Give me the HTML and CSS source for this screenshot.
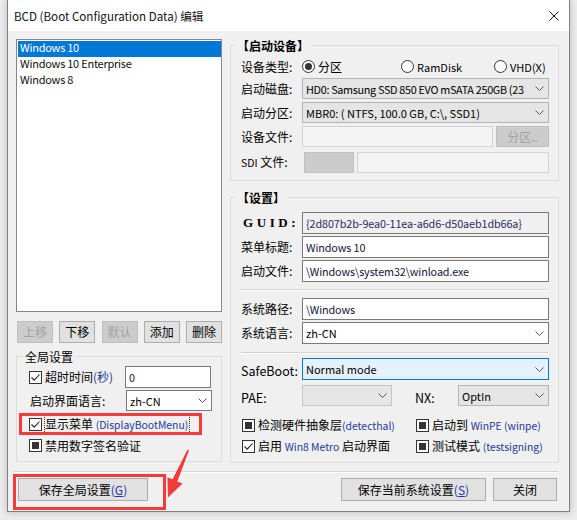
FILE: index.html
```html
<!DOCTYPE html>
<html lang="zh-CN">
<head>
<meta charset="utf-8">
<title>BCD 编辑</title>
<link rel="stylesheet" href="styles.css">
</head>
<body>
<div class="window">
  <div class="titlebar">
    <span class="title">BCD (Boot Configuration Data) 编辑</span>
    <svg class="close" width="10" height="10" viewBox="0 0 10 10"><path d="M0.5 0.5L9.5 9.5M9.5 0.5L0.5 9.5" stroke="#111" stroke-width="1" fill="none"/></svg>
  </div>
  <div class="client">
    <div class="main">
      <div class="left">
        <div class="listbox">
          <div class="item sel">Windows 10</div>
          <div class="item">Windows 10 Enterprise</div>
          <div class="item">Windows 8</div>
        </div>
        <div class="listbtns">
          <button class="btn small dis">上移</button>
          <button class="btn small">下移</button>
          <button class="btn small dis">默认</button>
          <button class="btn small">添加</button>
          <button class="btn small">删除</button>
        </div>
        <div class="group ggroup">
          <span class="gtitle plain">全局设置</span>
          <div class="lrow h22">
            <div class="lcell"><span class="cb"><svg width="11" height="11" viewBox="0 0 11 11"><path d="M1.5 5.5L4.2 8.2L9.5 2.5" stroke="#222" stroke-width="1.1" fill="none"/></svg></span><span class="cbtext">超时时间<span class="blue zh">(秒)</span></span></div>
            <div class="edit lfield">0</div>
          </div>
          <div class="lrow h21 mt2">
            <div class="lcell plabel">启动界面语言:</div>
            <div class="select white lfield"><span class="val">zh-CN</span><svg class="chev" width="9" height="5" viewBox="0 0 9 5"><path d="M0.5 0.5L4.5 4.5L8.5 0.5" stroke="#555" fill="none"/></svg></div>
          </div>
          <div class="lrow h21 mt3">
            <div class="lcell"><span class="cb"><svg width="11" height="11" viewBox="0 0 11 11"><path d="M1.5 5.5L4.2 8.2L9.5 2.5" stroke="#222" stroke-width="1.1" fill="none"/></svg></span><span class="cbtext focus">显示菜单 <span class="blue">(DisplayBootMenu)</span></span></div>
          </div>
          <div class="lrow h21">
            <div class="lcell"><span class="cb ind"></span><span class="cbtext">禁用数字签名验证</span></div>
          </div>
        </div>
      </div>

      <div class="right">
        <div class="group dev">
          <span class="gtitle">【启动设备】</span>
          <div class="frow h21">
            <div class="flabel">设备类型:</div>
            <div class="radios">
              <span class="ritem r1"><span class="rb on"></span>分区</span>
              <span class="ritem r2"><span class="rb"></span><span class="lat">RamDisk</span></span>
              <span class="ritem r3"><span class="rb"></span><span class="lat">VHD(X)</span></span>
            </div>
          </div>
          <div class="frow h21 mt1">
            <div class="flabel">启动磁盘:</div>
            <div class="select gray ffield"><span class="val tight">HD0: Samsung SSD 850 EVO mSATA 250GB (23</span><svg class="chev" width="9" height="5" viewBox="0 0 9 5"><path d="M0.5 0.5L4.5 4.5L8.5 0.5" stroke="#555" fill="none"/></svg></div>
          </div>
          <div class="frow h21 mt3">
            <div class="flabel">启动分区:</div>
            <div class="select gray ffield"><span class="val">MBR0: ( NTFS, 100.0 GB, C:\, SSD1)</span><svg class="chev" width="9" height="5" viewBox="0 0 9 5"><path d="M0.5 0.5L4.5 4.5L8.5 0.5" stroke="#555" fill="none"/></svg></div>
          </div>
          <div class="frow h21 mt3">
            <div class="flabel">设备文件:</div>
            <div class="edit disabled filefield"></div>
            <button class="btn dis pbtn">分区..</button>
          </div>
          <div class="frow h21 mt5">
            <div class="flabel"><span class="sdi">SDI</span> 文件:</div>
            <div class="graybox"></div>
            <div class="edit disabled sdifield"></div>
          </div>
        </div>

        <div class="group set">
          <span class="gtitle">【设置】</span>
          <div class="frow h22">
            <div class="flabel guid">GUID:</div>
            <div class="edit ro ffield">{2d807b2b-9ea0-11ea-a6d6-d50aeb1db66a}</div>
          </div>
          <div class="frow h22 mt2">
            <div class="flabel">菜单标题:</div>
            <div class="edit ffield">Windows 10</div>
          </div>
          <div class="frow h22 mt2">
            <div class="flabel">启动文件:</div>
            <div class="edit ffield">\Windows\system32\winload.exe</div>
          </div>
          <div class="hsep s1"></div>
          <div class="frow h22">
            <div class="flabel">系统路径:</div>
            <div class="edit ffield">\Windows</div>
          </div>
          <div class="frow h22 mt2">
            <div class="flabel">系统语言:</div>
            <div class="select white ffield"><span class="val">zh-CN</span><svg class="chev" width="9" height="5" viewBox="0 0 9 5"><path d="M0.5 0.5L4.5 4.5L8.5 0.5" stroke="#555" fill="none"/></svg></div>
          </div>
          <div class="hsep s2"></div>
          <div class="frow h22">
            <div class="flabel lat13 low">SafeBoot:</div>
            <div class="select focus ffield"><span class="val">Normal mode</span><svg class="chev" width="9" height="5" viewBox="0 0 9 5"><path d="M0.5 0.5L4.5 4.5L8.5 0.5" stroke="#555" fill="none"/></svg></div>
          </div>
          <div class="frow h21 mt5">
            <div class="flabel lat13 low">PAE:</div>
            <div class="select dimmed pae"><span class="val"></span><svg class="chev" width="9" height="5" viewBox="0 0 9 5"><path d="M0.5 0.5L4.5 4.5L8.5 0.5" stroke="#555" fill="none"/></svg></div>
            <div class="nxlabel lat13 low">NX:</div>
            <div class="select gray nx"><span class="val">OptIn</span><svg class="chev" width="9" height="5" viewBox="0 0 9 5"><path d="M0.5 0.5L4.5 4.5L8.5 0.5" stroke="#555" fill="none"/></svg></div>
          </div>
          <div class="cbgrid">
            <div class="lcell"><span class="cb ind"></span><span class="cbtext">检测硬件抽象层<span class="blue">(detecthal)</span></span></div>
            <div class="lcell"><span class="cb ind"></span><span class="cbtext">启动到 <span class="blue">WinPE (winpe)</span></span></div>
            <div class="lcell"><span class="cb"><svg width="11" height="11" viewBox="0 0 11 11"><path d="M1.5 5.5L4.2 8.2L9.5 2.5" stroke="#222" stroke-width="1.1" fill="none"/></svg></span><span class="cbtext">启用 <span class="blue">Win8 Metro</span> 启动界面</span></div>
            <div class="lcell"><span class="cb ind"></span><span class="cbtext">测试模式 <span class="blue">(testsigning)</span></span></div>
          </div>
        </div>
      </div>
    </div>
    <div class="bsep"></div>
    <div class="bottombar">
      <button class="btn big saveg">保存全局设置<span class="blue zh">(<u>G</u>)</span></button>
      <div class="rbtns">
        <button class="btn big saves">保存当前系统设置<span class="blue zh">(<u>S</u>)</span></button>
        <button class="btn big closeb">关闭</button>
      </div>
    </div>
  </div>
</div>
<svg class="annot" width="577" height="520" viewBox="0 0 577 520">
  <rect x="20.5" y="414.5" width="180" height="19" fill="none" stroke="#f33b3b" stroke-width="3"/>
  <rect x="14.5" y="475.5" width="150" height="33" fill="none" stroke="#f33b3b" stroke-width="3"/>
  <polygon points="189,450.5 177.3,481.4 182.6,483.6 168,497.5 167.4,477.2 172.6,479.3 187.6,449.6" fill="#f33b3b"/>
</svg>
</body>
</html>
```
FILE: styles.css
```css
html, body {
  margin: 0;
  padding: 0;
}
body {
  width: 577px;
  height: 520px;
  background: #ececec;
  position: relative;
  overflow: hidden;
  font-family: "Noto Sans CJK SC", "Noto Sans", sans-serif;
  font-size: 12px;
  color: #000;
}
.window {
  margin-left: 7px;
  width: 563px;
  height: 512px;
  box-sizing: border-box;
  border: 1px solid #7f7f7f;
  border-top: 0;
  background: #f0f0f0;
  box-shadow: 0 0 7px rgba(0, 0, 0, 0.22);
  display: flex;
  flex-direction: column;
}
.titlebar {
  height: 31px;
  flex: none;
  background: #fff;
  display: flex;
  align-items: center;
  justify-content: space-between;
  padding: 0 10px 0 6px;
}
.title {
  font-size: 11.6px;
  color: #111;
  line-height: 16px;
}
.close { display: block; }
.client {
  flex: 1;
  padding: 8px 10px 0 8px;
  display: flex;
  flex-direction: column;
}
.main {
  display: flex;
  gap: 8px;
  height: 424px;
}
.left {
  width: 206px;
  display: flex;
  flex-direction: column;
}
.right {
  width: 329px;
  display: flex;
  flex-direction: column;
}

/* listbox */
.listbox {
  height: 273px;
  box-sizing: border-box;
  border: 1px solid #828790;
  background: #fff;
  padding: 1px 0 1px 1px;
}
.item {
  height: 16px;
  line-height: 13px;
  padding-left: 2px;
  font-size: 11px;
  letter-spacing: -0.25px;
  color: #111;
  white-space: nowrap;
}
.item.sel {
  background: #0078d7;
  color: #fff;
}
.listbtns {
  margin-top: 9px;
  display: flex;
  justify-content: space-between;
  padding-left: 1px;
}

/* buttons */
.btn {
  font-family: inherit;
  font-size: 12px;
  color: #000;
  background: #e1e1e1;
  border: 1px solid #adadad;
  box-sizing: border-box;
  padding: 0;
  margin: 0;
  line-height: 16px;
  display: flex;
  align-items: center;
  justify-content: center;
}
.btn.small {
  width: 36px;
  height: 22px;
}
.btn.dis {
  background: #cccccc;
  border-color: #bfbfbf;
  color: #a3a3a3;
}
.btn.big {
  height: 23px;
}

/* group boxes */
.group {
  position: relative;
  border: 1px solid #dcdcdc;
  box-sizing: border-box;
}
.gtitle {
  position: absolute;
  top: -9px;
  left: 4px;
  padding: 0 2px;
  background: #f0f0f0;
  line-height: 17px;
  font-weight: bold;
}
.gtitle.plain {
  font-weight: normal;
  left: 6px;
}
.ggroup {
  margin-top: 13px;
  height: 106px;
  padding: 9px 0 0 12px;
}
.lrow {
  display: flex;
  align-items: center;
}
.lcell {
  width: 96px;
  display: flex;
  align-items: center;
  white-space: nowrap;
  line-height: 16px;
}
.h22 { height: 22px; }
.h21 { height: 21px; }
.mt1 { margin-top: 1px; }
.mt2 { margin-top: 2px; }
.mt3 { margin-top: 3px; }
.mt5 { margin-top: 5px; }
.plabel { padding-left: 1px; }
.lfield { width: 86px; }
.lrow .edit.lfield { height: 22px; }
.lrow .select.lfield { height: 21px; }

/* checkboxes / radios */
.cb {
  width: 13px;
  height: 13px;
  box-sizing: border-box;
  border: 1px solid #333;
  background: #fff;
  display: inline-flex;
  align-items: center;
  justify-content: center;
  flex: none;
}
.cb svg { display: block; }
.cb.ind::after {
  content: "";
  width: 7px;
  height: 7px;
  background: #333;
}
.cbtext {
  margin-left: 3px;
  white-space: nowrap;
}
.cbtext.focus {
  outline: 1px dotted #333;
  outline-offset: 0;
  padding-right: 1px;
}
.blue {
  color: #23389a;
  font-size: 10.4px;
}
.blue.zh {
  font-size: 12px;
}
.rb {
  width: 13px;
  height: 13px;
  box-sizing: border-box;
  border: 1px solid #333;
  border-radius: 50%;
  background: #fff;
  display: inline-flex;
  align-items: center;
  justify-content: center;
  flex: none;
  margin-right: 3px;
}
.rb.on::after {
  content: "";
  width: 7px;
  height: 7px;
  border-radius: 50%;
  background: #333;
}

/* right groups */
.dev {
  margin-top: 6px;
  height: 136px;
  padding: 10px 9px 0 10px;
}
.set {
  margin-top: 16px;
  height: 266px;
  padding: 14px 9px 0 10px;
}
.frow {
  display: flex;
  align-items: center;
}
.flabel {
  width: 61px;
  flex: none;
  white-space: nowrap;
  line-height: 16px;
}
.ffield {
  width: 247px;
  flex: none;
}
.frow .edit, .frow .select { height: 100%; }
.radios {
  display: flex;
  align-items: center;
  height: 100%;
  line-height: 16px;
}
.ritem {
  display: flex;
  align-items: center;
}
.ritem.r1 { width: 99px; }
.ritem.r2 { width: 93px; }
.lat { font-size: 11px; }
.lat13 { font-size: 12.5px; }
.low { padding-top: 4px; }
.sdi { font-size: 10.5px; }
.guid {
  font-family: "Liberation Serif", serif;
  font-weight: bold;
  font-size: 13px;
  letter-spacing: 3.6px;
  padding-left: 2px;
  box-sizing: border-box;
}

/* edits and selects */
.edit {
  box-sizing: border-box;
  border: 1px solid #7a7a7a;
  background: #fff;
  padding: 0 3px;
  display: flex;
  align-items: center;
  white-space: nowrap;
  overflow: hidden;
  font-size: 10.8px;
  letter-spacing: -0.1px;
  color: #14143c;
  line-height: 16px;
}
.edit.ro {
  background: #f0f0f0;
  color: #2a2a66;
}
.edit.disabled {
  background: #f3f3f3;
  border-color: #d3d3d3;
}
.filefield { width: 191px; flex: none; }
.pbtn {
  width: 53px;
  height: 100%;
  margin-left: 3px;
  flex: none;
}
.graybox {
  width: 50px;
  height: 100%;
  margin-left: 2px;
  box-sizing: border-box;
  background: #cccccc;
  border: 1px solid #c0c0c0;
  flex: none;
}
.sdifield {
  width: 192px;
  margin-left: 3px;
  flex: none;
}
.select {
  box-sizing: border-box;
  border: 1px solid #adadad;
  background: #e1e1e1;
  display: flex;
  align-items: center;
  padding: 0 4px 0 3px;
  overflow: hidden;
  line-height: 16px;
  font-size: 11px;
}
.select .val {
  flex: 1;
  min-width: 0;
  overflow: hidden;
  white-space: nowrap;
  margin-right: 2px;
}
.select .val.tight {
  letter-spacing: -0.3px;
  font-size: 10.8px;
}
.select .chev {
  flex: none;
  display: block;
}
.select.white {
  background: #fff;
  border-color: #7a7a7a;
}
.select.gray {
  background: #e5e5e5;
  border-color: #b4b4b4;
}
.select.focus {
  background: #e5f1fb;
  border-color: #0078d7;
}
.select.dimmed {
  background: #e6e6e6;
  border-color: #c6c6c6;
}
.pae { width: 90px; flex: none; }
.nxlabel {
  width: 43px;
  margin-left: 23px;
  flex: none;
}
.nx { width: 91px; flex: none; }
.hsep {
  height: 0;
  border-top: 1px solid #d2d2d2;
  border-bottom: 1px solid #ffffff;
  width: 307px;
}
.s1 { margin: 7px 0 7px 0; }
.s2 { margin: 8px 0 4px 0; }
.cbgrid {
  margin-top: 9px;
  display: grid;
  grid-template-columns: 174px 1fr;
  grid-auto-rows: 21px;
  padding-left: 1px;
}
.cbgrid .lcell { width: auto; }

/* bottom */
.bsep {
  margin: 8px 1px 0 -3px;
  border-top: 1px solid #d4d4d4;
  border-bottom: 1px solid #ffffff;
}
.bottombar {
  margin-top: 5px;
  display: flex;
  justify-content: space-between;
  padding: 0 2px;
}
.saveg { width: 130px; }
.rbtns {
  display: flex;
  gap: 7px;
}
.saves { width: 145px; }
.closeb { width: 64px; }
u { text-decoration: underline; }

.annot {
  position: absolute;
  left: 0;
  top: 0;
  pointer-events: none;
}
```
